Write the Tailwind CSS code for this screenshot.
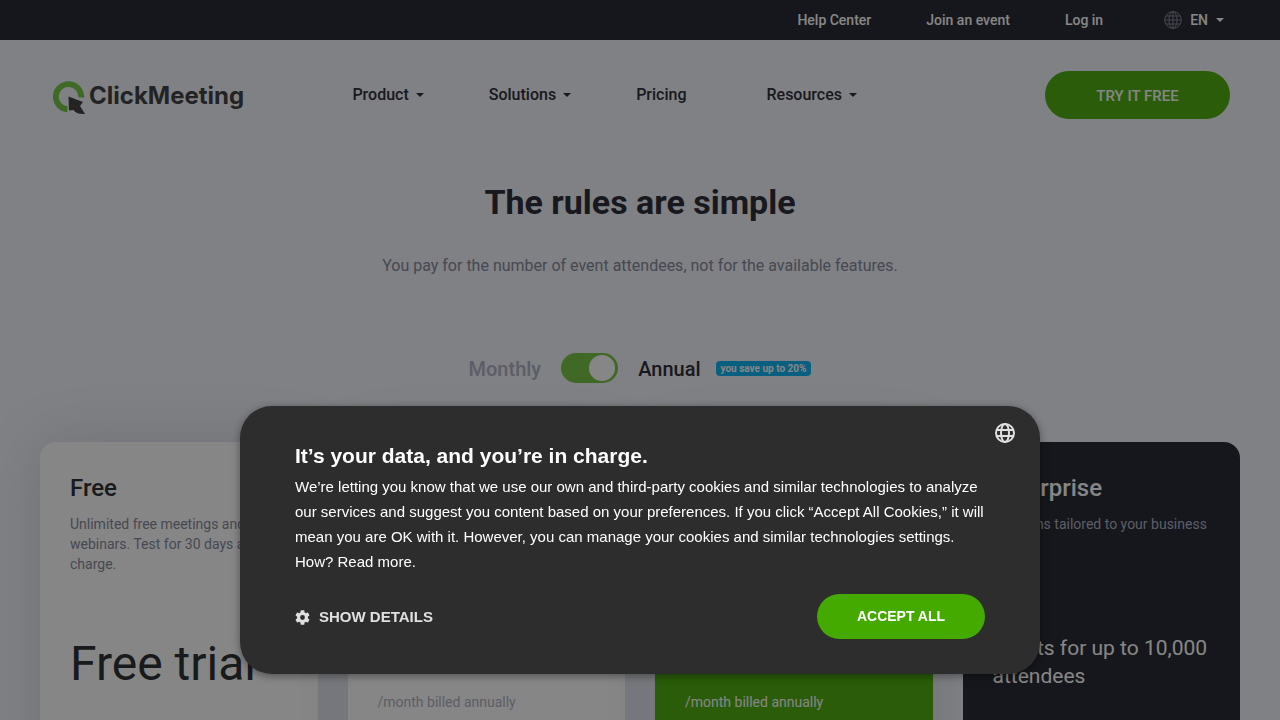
<!DOCTYPE html>
<html lang="en">
<head>
    <meta charset="UTF-8">
    <meta name="viewport" content="width=device-width, initial-scale=1.0">
    <title>ClickMeeting Pricing</title>
    <script src="https://cdn.jsdelivr.net/npm/@tailwindcss/browser@4"></script>
</head>
<body class="bg-[#f2f4fb] font-['Roboto',sans-serif] text-[#1f212b] h-screen overflow-hidden">

    <!-- Top Bar -->
    <div class="bg-[#1c1e28] h-10 flex items-center justify-end pr-14 text-sm font-medium text-white">
        <a href="#" class="mr-[55px]">Help Center</a>
        <a href="#" class="mr-[55px]">Join an event</a>
        <a href="#" class="mr-[61px]">Log in</a>
        <button type="button" class="flex items-center">
            <svg class="w-[18px] h-[18px] mr-2" viewBox="0 0 18 18" fill="none" stroke="#7e8295" stroke-width="1" aria-hidden="true">
                <circle cx="9" cy="9" r="8.3"/>
                <ellipse cx="9" cy="9" rx="4" ry="8.3"/>
                <path d="M9 .7v16.6M.7 9h16.6M2 5h14M2 13h14"/>
            </svg>
            EN
            <svg class="w-2 h-1 ml-2" viewBox="0 0 8 4" fill="currentColor" aria-hidden="true"><path d="M0 0h8L4 4z"/></svg>
        </button>
    </div>

    <!-- Header -->
    <header class="h-[110px] flex items-center pl-[53px] pr-[50px]">
        <a href="#" class="flex items-center mr-auto text-[#363636]">
            <svg class="w-8 h-[34px] mr-1 mt-[5px]" viewBox="0 0 32 34" aria-hidden="true">
                <path d="M14.500 28.400A12.700 12.700 0 1 1 28.200 16.500" fill="none" stroke="#6fc63a" stroke-width="5.800"/>
                <path d="M15.500 15.500 30 21 27 25 32 33Q23 33.500 20.500 29L16 29.500z" fill="#363636"/>
            </svg>
            <span class="font-['Inter',sans-serif] font-bold text-2xl pt-[2px]">ClickMeeting</span>
        </a>
        <nav class="flex items-center gap-[65px] text-base font-medium mr-[188px]">
            <button type="button" class="flex items-center">Product <svg class="w-2 h-1 ml-[7px]" viewBox="0 0 8 4" fill="currentColor" aria-hidden="true"><path d="M0 0h8L4 4z"/></svg></button>
            <button type="button" class="flex items-center">Solutions <svg class="w-2 h-1 ml-[7px]" viewBox="0 0 8 4" fill="currentColor" aria-hidden="true"><path d="M0 0h8L4 4z"/></svg></button>
            <a href="#" class="mr-[15px]">Pricing</a>
            <button type="button" class="flex items-center">Resources <svg class="w-2 h-1 ml-[7px]" viewBox="0 0 8 4" fill="currentColor" aria-hidden="true"><path d="M0 0h8L4 4z"/></svg></button>
        </nav>
        <a href="#" class="w-[185px] h-12 rounded-full bg-[#4a0] text-white flex items-center justify-center text-[15px] font-medium pt-[2px]">TRY IT FREE</a>
    </header>

    <main>
        <!-- Intro -->
        <div class="text-center pt-8">
            <h1 class="text-[34px] leading-10 font-bold">The rules are simple</h1>
            <p class="text-base leading-6 mt-8 text-[#7e8295]">You pay for the number of event attendees, not for the available features.</p>
        </div>

        <!-- Billing Toggle -->
        <div class="flex items-center justify-center mt-[75px] text-xl font-medium">
            <span class="pt-[2px] text-[#a9adbf]">Monthly</span>
            <label class="relative mx-5 w-[57px] h-[30px]">
                <input type="checkbox" checked aria-label="Annual billing" class="appearance-none block w-full h-full rounded-full bg-[#70c43a]">
                <span class="absolute right-[3px] top-[2px] w-[26px] h-[26px] rounded-full bg-white"></span>
            </label>
            <span class="pt-[2px]">Annual</span>
            <span class="ml-[15px] h-[15px] px-[5px] rounded bg-[#00b0f0] text-white text-[10px] leading-[15px] font-bold">you save up to 20%</span>
        </div>

        <!-- Plans -->
        <div class="grid grid-cols-4 gap-[30px] px-10 mt-[59px] text-sm leading-5">
            <section class="h-[480px] rounded-2xl bg-white p-[30px] text-[#212326] shadow-[0_0_60px_rgba(43,45,75,0.15)]">
                <h2 class="text-2xl leading-8 font-medium">Free</h2>
                <p class="mt-[10px] h-[120px] text-[#7e8295]">Unlimited free meetings and webinars. Test for 30 days at no charge.</p>
                <p class="text-5xl leading-[60px] whitespace-nowrap">Free trial</p>
            </section>
            <section class="h-[480px] rounded-2xl bg-white px-[30px] pt-[250px] shadow-[0_0_60px_rgba(43,45,75,0.15)]">
                <p class="text-[#a9adbf]">/month billed annually</p>
            </section>
            <section class="h-[480px] rounded-2xl bg-[#4a0] text-white px-[30px] pt-[250px] shadow-[0_0_60px_rgba(43,45,75,0.15)]">
                <p>/month billed annually</p>
            </section>
            <section class="h-[480px] rounded-2xl bg-[#1c1e28] text-white p-[30px]">
                <h2 class="text-2xl leading-8 font-medium">Enterprise</h2>
                <p class="mt-[10px] h-[120px] text-[#a9adbf]">Solutions tailored to your business</p>
                <p class="text-[21px] leading-7 whitespace-nowrap">Events for up to 10,000<br>attendees</p>
            </section>
        </div>
    </main>

    <!-- Cookie Consent -->
    <div class="fixed inset-0 bg-[#121212]/51"></div>
    <div role="dialog" aria-labelledby="cookie-title" class="fixed left-1/2 -translate-x-1/2 top-[406px] w-full max-w-[800px] rounded-[32px] bg-[#2d2d2d] text-white px-[55px] pt-[37px] pb-[35px] font-['Liberation_Sans',sans-serif] shadow-[0_2px_8px_rgba(0,0,0,0.4)]">
        <button type="button" aria-label="Language" class="absolute right-[25px] top-[17px]">
            <svg class="w-5 h-5" viewBox="0 0 20 20" fill="none" stroke="#e0e0e0" stroke-width="2" aria-hidden="true">
                <circle cx="10" cy="10" r="9"/>
                <ellipse cx="10" cy="10" rx="4" ry="9"/>
                <path d="M2 7h16M2 13h16"/>
            </svg>
        </button>
        <h2 id="cookie-title" class="text-[21px] leading-[26px] font-bold">It’s your data, and you’re in charge.</h2>
        <p class="mt-[5px] text-[15px] leading-[25px]">We’re letting you know that we use our own and third-party cookies and similar technologies to analyze our services and suggest you content based on your preferences. If you click “Accept All Cookies,” it will mean you are OK with it. However, you can manage your cookies and similar technologies settings. How? <a href="#">Read more.</a></p>
        <div class="flex items-center justify-between mt-5">
            <button type="button" class="flex items-center gap-[9px] pt-px text-[15px] font-bold text-[#e0e0e0]">
                <svg class="w-[15px] h-[15px]" viewBox="2 2 20 20" fill="currentColor" aria-hidden="true">
                    <path d="M19.140 12.940c.04-.3.06-.61.06-.94 0-.32-.02-.64-.07-.94l2.030-1.580c.18-.14.23-.41.12-.61l-1.920-3.320c-.12-.22-.37-.29-.59-.22l-2.390.96c-.5-.38-1.030-.7-1.620-.94l-.36-2.540c-.04-.24-.24-.41-.48-.41h-3.840c-.24 0-.43.17-.47.41l-.36 2.540c-.59.24-1.130.57-1.620.94l-2.390-.96c-.22-.08-.47 0-.59.22L2.740 8.870c-.12.21-.08.47.12.61l2.030 1.580c-.05.3-.09.63-.09.94s.02.64.07.94l-2.030 1.580c-.18.14-.23.41-.12.61l1.920 3.320c.12.22.37.29.59.22l2.390-.96c.5.38 1.030.7 1.620.94l.36 2.540c.05.24.24.41.48.41h3.840c.24 0 .44-.17.47-.41l.36-2.540c.59-.24 1.130-.56 1.620-.94l2.390.96c.22.08.47 0 .59-.22l1.920-3.320c.12-.22.07-.47-.12-.61l-2.010-1.580zM12 15.200a3.200 3.200 0 1 1 0-6.400 3.200 3.200 0 0 1 0 6.400z"/>
                </svg>
                SHOW DETAILS
            </button>
            <button type="button" class="w-[168px] h-[45px] pb-px rounded-full bg-[#4a0] text-sm font-bold">ACCEPT ALL</button>
        </div>
    </div>

</body>
</html>
